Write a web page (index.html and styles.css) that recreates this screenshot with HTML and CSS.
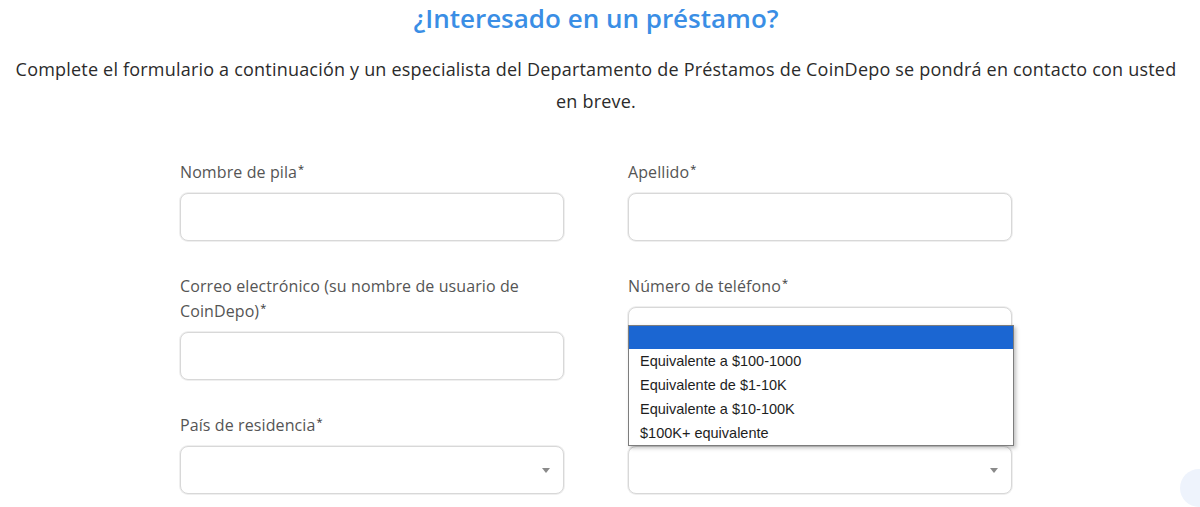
FILE: index.html
```html
<!DOCTYPE html>
<html lang="es">
<head>
<meta charset="utf-8">
<title>¿Interesado en un préstamo?</title>
<link rel="stylesheet" href="styles.css">
</head>
<body>
<main class="page">
  <h2 class="title">¿Interesado en un préstamo?</h2>
  <p class="intro">Complete el formulario a continuación y un especialista del Departamento de Préstamos de CoinDepo se pondrá en contacto con usted<br>en breve.</p>
  <form class="form">
    <div class="field">
      <label class="label required">Nombre de pila</label>
      <div class="input"></div>
    </div>
    <div class="field">
      <label class="label required">Apellido</label>
      <div class="input"></div>
    </div>
    <div class="field">
      <label class="label required">Correo electrónico (su nombre de usuario de CoinDepo)</label>
      <div class="input"></div>
    </div>
    <div class="field">
      <label class="label required">Número de teléfono</label>
      <div class="input"></div>
    </div>
    <div class="field">
      <label class="label required">País de residencia</label>
      <div class="input select"><span class="arrow"></span></div>
    </div>
    <div class="field">
      <label class="label required label-covered">Monto del préstamo</label>
      <div class="input select">
        <span class="arrow"></span>
        <ul class="dropdown">
          <li class="opt active"></li>
          <li class="opt">Equivalente a $100-1000</li>
          <li class="opt">Equivalente de $1-10K</li>
          <li class="opt">Equivalente a $10-100K</li>
          <li class="opt">$100K+ equivalente</li>
        </ul>
      </div>
    </div>
  </form>
  <div class="to-top"></div>
</main>
</body>
</html>
```

FILE: styles.css
```css
* { box-sizing: border-box; }
html, body { margin: 0; padding: 0; background: #fff; }
body { font-family: "Open Sans", "Noto Sans", sans-serif; color: #333; overflow: hidden; }
.page { padding-right: 8px; position: relative; height: 507px; }
.title {
  margin: 0;
  text-align: center;
  font-size: 26px;
  line-height: 36px;
  font-weight: 600;
  color: #3a8ee5;
}
.intro {
  margin: 17px 0 0;
  text-align: center;
  font-size: 18px;
  line-height: 32px;
  letter-spacing: 0.2px;
  color: #2b2b2b;
}
.form {
  width: 832px;
  margin: 43px auto 0;
  display: grid;
  grid-template-columns: 384px 384px;
  column-gap: 64px;
  row-gap: 33px;
  align-items: start;
}
.field { display: flex; flex-direction: column; gap: 8px; }
.label {
  font-size: 16px;
  line-height: 25px;
  letter-spacing: 0.1px;
  color: #555;
}
.required::after {
  content: "*";
  font-size: 11px;
  line-height: 18px;
  vertical-align: top;
  color: #333;
  margin-left: 1px;
}
.label-covered { visibility: hidden; }
.input {
  height: 48px;
  border: 1px solid #d8d8d8;
  border-radius: 8px;
  box-shadow: 0 0 0 1px #efefef;
  background: #fff;
  position: relative;
  display: flex;
  align-items: center;
  justify-content: flex-end;
  padding-right: 13px;
}
.arrow {
  width: 0; height: 0;
  border-left: 4px solid transparent;
  border-right: 4px solid transparent;
  border-top: 5px solid #8a8a8a;
}
.dropdown {
  position: absolute;
  left: -1px;
  top: -122px;
  width: 386px;
  margin: 0;
  padding: 0;
  list-style: none;
  background: #fff;
  border: 1px solid #7d7d7d;
  box-shadow: 2px 2px 4px rgba(0,0,0,0.25);
  font-family: "Liberation Sans", Arial, sans-serif;
  font-size: 14.5px;
  color: #1e1e1e;
  z-index: 2;
}
.opt { height: 24px; line-height: 24px; padding-left: 11px; }
.opt.active { background: #1b66d2; height: 23px; }
.to-top {
  position: absolute;
  right: -18px;
  bottom: 0;
  width: 38px;
  height: 38px;
  border-radius: 50%;
  background: #eef3fc;
}
```
